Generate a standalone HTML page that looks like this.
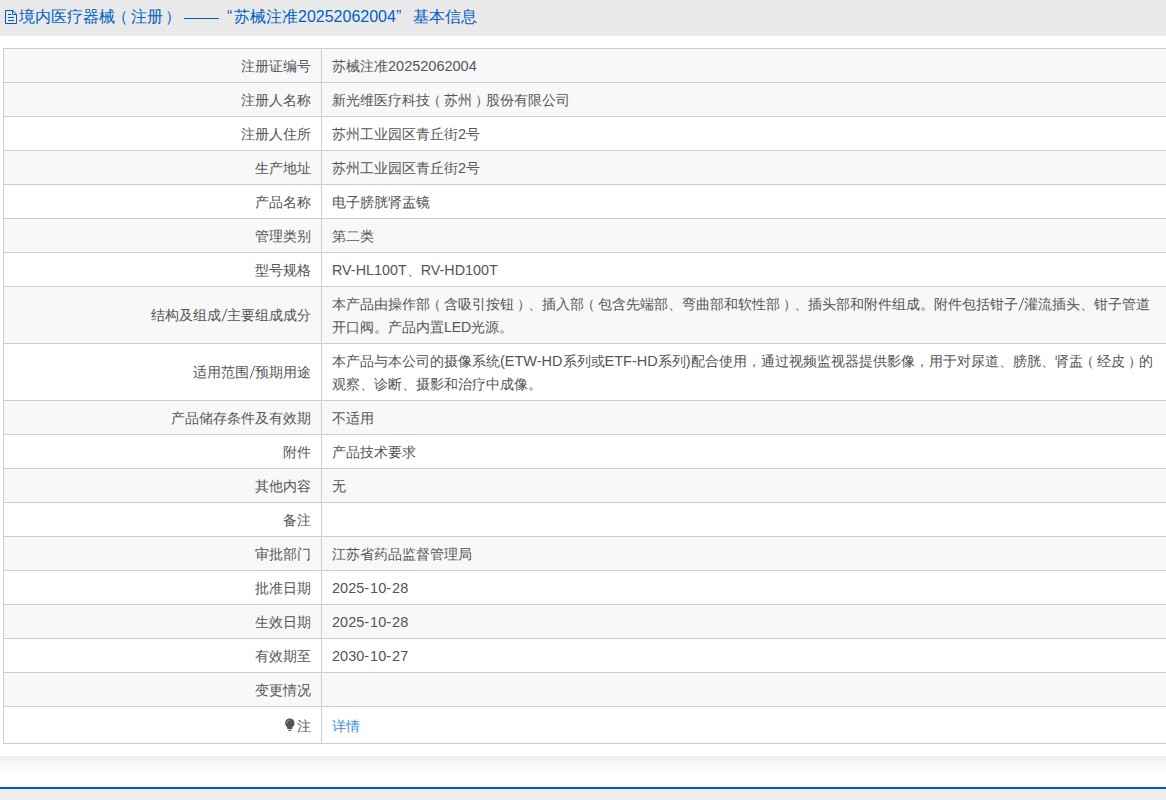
<!DOCTYPE html>
<html><head><meta charset="utf-8">
<style>
*{margin:0;padding:0;box-sizing:border-box}
html,body{width:1166px;height:800px;overflow:hidden;background:#fff;font-family:"Liberation Sans",sans-serif;font-size:14px;color:#555}
.hd{position:absolute;left:0;top:0;width:1166px;height:36px;background:#e9e9e9;border-bottom:1px solid #e9ecf4}
.hd span{position:absolute;top:5px;height:24px;line-height:24px;font-size:16px;color:#005ec6;white-space:nowrap}
.hd .dash{position:absolute;left:184px;top:18px;width:35px;height:1px;background:#005fc8}
.hd svg{position:absolute;left:0;top:0}
table{position:absolute;left:3px;top:48px;width:1200px;border-collapse:collapse;table-layout:fixed}
td{border:1px solid #cfcdce;padding:6px 10px 4px 10px;line-height:23px;vertical-align:middle;white-space:nowrap}
td.l{width:318px;text-align:right}
tr:nth-child(even) td{background:#f8f8f8}
tr.hov td{background:#f7f8fa}
tr.last td{height:37px;padding-top:6px;padding-bottom:4px}
.sh{position:absolute;left:0;top:756px;width:1166px;height:16px;background:linear-gradient(#ededed,#f7f7f7 50%,#fff)}
.bl{position:absolute;left:0;top:787px;width:1166px;height:2px;background:#0357be}
.ft{position:absolute;left:0;top:789px;width:1166px;height:11px;background:#eeeeee}
a{color:#3d8fe0;text-decoration:none}
i{font-style:normal;position:relative}
.lp{left:-3px}.rp{left:3px}
b{font-weight:normal}.n{font-size:14.5px}.rv{font-size:14.35px}.up{position:relative;top:-1px}
.sl{display:inline-block;vertical-align:-2px;overflow:visible}.hy{letter-spacing:1px}
.bulb{display:inline-block;vertical-align:-1px;margin-right:1px}
</style></head><body>
<div class="hd">
<svg width="22" height="30" viewBox="0 0 22 30"><path d="M5.5 10.5 H12.8 L16.5 14.2 V23.5 H5.5 Z M12.5 10.5 V14.5 H16.5 M8 14.5 H11 M8 17.5 H14 M8 20.5 H14" fill="none" stroke="#005ec6" stroke-width="1"/></svg>
<span style="left:19px">境内医疗器械</span>
<span style="left:112px">（</span>
<span style="left:131px">注册</span>
<span style="left:165px">）</span>
<div class="dash"></div>
<span style="left:227px">“</span>
<span style="left:234px">苏械注准20252062004</span>
<span style="left:396px">”</span>
<span style="left:413px">基本信息</span>
</div>
<table>
<tr class="hov"><td class="l">注册证编号</td><td>苏械注准<b class="n">20252062004</b></td></tr>
<tr><td class="l">注册人名称</td><td>新光维医疗科技<i class="lp">（</i>苏州<i class="rp">）</i>股份有限公司</td></tr>
<tr><td class="l">注册人住所</td><td>苏州工业园区青丘街<b class="n">2</b>号</td></tr>
<tr><td class="l">生产地址</td><td>苏州工业园区青丘街<b class="n">2</b>号</td></tr>
<tr><td class="l">产品名称</td><td>电子膀胱肾盂镜</td></tr>
<tr><td class="l">管理类别</td><td>第二类</td></tr>
<tr><td class="l">型号规格</td><td><b class="n rv">RV-HL100T</b>、<b class="n rv">RV-HD100T</b></td></tr>
<tr><td class="l"><span class="up">结构及组成<svg class="sl" width="6" height="14" viewBox="0 0 6 14"><line x1="1.1" y1="13.5" x2="5.8" y2="0.9" stroke="#555" stroke-width="1"/></svg>主要组成成分</span></td><td>本产品由操作部<i class="lp">（</i>含吸引按钮<i class="rp">）</i>、插入部<i class="lp">（</i>包含先端部、弯曲部和软性部<i class="rp">）</i>、插头部和附件组成。附件包括钳子<svg class="sl" width="6" height="14" viewBox="0 0 6 14"><line x1="1.1" y1="13.5" x2="5.8" y2="0.9" stroke="#555" stroke-width="1"/></svg>灌流插头、钳子管道<br>开口阀。产品内置LED光源。</td></tr>
<tr><td class="l"><span class="up">适用范围<svg class="sl" width="6" height="14" viewBox="0 0 6 14"><line x1="1.1" y1="13.5" x2="5.8" y2="0.9" stroke="#555" stroke-width="1"/></svg>预期用途</span></td><td>本产品与本公司的摄像系统<b class="n">(ETW-HD</b>系列或<b class="n">ETF-HD</b>系列<b class="n">)</b>配合使用，通过视频监视器提供影像，用于对尿道、膀胱、肾盂<i class="lp">（</i>经皮<i class="rp">）</i>的<br>观察、诊断、摄影和治疗中成像。</td></tr>
<tr><td class="l">产品储存条件及有效期</td><td>不适用</td></tr>
<tr><td class="l">附件</td><td>产品技术要求</td></tr>
<tr><td class="l">其他内容</td><td>无</td></tr>
<tr><td class="l">备注</td><td></td></tr>
<tr><td class="l">审批部门</td><td>江苏省药品监督管理局</td></tr>
<tr><td class="l">批准日期</td><td><b class="n">2025<b class="hy">-</b>10<b class="hy">-</b>28</b></td></tr>
<tr><td class="l">生效日期</td><td><b class="n">2025<b class="hy">-</b>10<b class="hy">-</b>28</b></td></tr>
<tr><td class="l">有效期至</td><td><b class="n">2030<b class="hy">-</b>10<b class="hy">-</b>27</b></td></tr>
<tr><td class="l">变更情况</td><td></td></tr>
<tr class="last"><td class="l"><svg class="bulb" width="12" height="14" viewBox="0 0 12 14"><path d="M5.8 0.6 C3 0.6 1.1 2.6 1.1 5.2 C1.1 6.9 2 8 3 9 L3.4 10.9 H8.2 L8.6 9 C9.6 8 10.5 6.9 10.5 5.2 C10.5 2.6 8.6 0.6 5.8 0.6 Z" fill="#555"/><path d="M2.7 5.6 C2.7 3.7 3.8 2.5 5.4 2.3" stroke="#fff" stroke-width="0.9" fill="none" opacity="0.55"/><rect x="4.3" y="11.8" width="3" height="1.2" fill="#555"/></svg>注</td><td><a>详情</a></td></tr>
</table>
<div class="sh"></div>
<div class="bl"></div>
<div class="ft"></div>
</body></html>
